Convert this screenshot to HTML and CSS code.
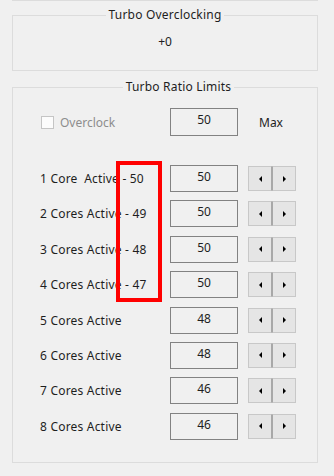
FILE: index.html
```html
<!DOCTYPE html>
<html lang="en">
<head>
    <meta charset="UTF-8">
    <title>Turbo Ratio Limits</title>
    <link rel="stylesheet" href="styles.css">
</head>
<body>
<!-- 上一个分组框的底边 -->
<div class="prev-edge"></div>

<!-- Turbo Overclocking 分组 -->
<fieldset class="group group-oc">
    <legend>Turbo Overclocking</legend>
    <div class="oc-value">+0</div>
</fieldset>

<!-- Turbo Ratio Limits 分组 -->
<fieldset class="group group-ratio">
    <legend>Turbo Ratio Limits</legend>

    <div class="row row-top">
        <label class="check disabled"><span class="box"></span>Overclock</label>
        <div class="field">50</div>
        <span class="max">Max</span>
    </div>

    <div class="rows">
        <div class="row"><span class="label">1 Core&nbsp; Active - 50</span><div class="field">50</div><div class="spin"><span class="btn"><i class="arrow left"></i></span><span class="btn"><i class="arrow right"></i></span></div></div>
        <div class="row"><span class="label">2 Cores Active - 49</span><div class="field">50</div><div class="spin"><span class="btn"><i class="arrow left"></i></span><span class="btn"><i class="arrow right"></i></span></div></div>
        <div class="row"><span class="label">3 Cores Active - 48</span><div class="field">50</div><div class="spin"><span class="btn"><i class="arrow left"></i></span><span class="btn"><i class="arrow right"></i></span></div></div>
        <div class="row"><span class="label">4 Cores Active - 47</span><div class="field">50</div><div class="spin"><span class="btn"><i class="arrow left"></i></span><span class="btn"><i class="arrow right"></i></span></div></div>
        <div class="row"><span class="label">5 Cores Active</span><div class="field">48</div><div class="spin"><span class="btn"><i class="arrow left"></i></span><span class="btn"><i class="arrow right"></i></span></div></div>
        <div class="row"><span class="label">6 Cores Active</span><div class="field">48</div><div class="spin"><span class="btn"><i class="arrow left"></i></span><span class="btn"><i class="arrow right"></i></span></div></div>
        <div class="row"><span class="label">7 Cores Active</span><div class="field">46</div><div class="spin"><span class="btn"><i class="arrow left"></i></span><span class="btn"><i class="arrow right"></i></span></div></div>
        <div class="row"><span class="label">8 Cores Active</span><div class="field">46</div><div class="spin"><span class="btn"><i class="arrow left"></i></span><span class="btn"><i class="arrow right"></i></span></div></div>
    </div>

    <!-- 红色标注框 -->
    <div class="highlight"></div>
</fieldset>
</body>
</html>
```

FILE: styles.css
```css
* {
    margin: 0;
    padding: 0;
    box-sizing: border-box;
}

body {
    width: 334px;
    height: 476px;
    background-color: #f0f0f0;
    font-family: "Noto Sans", "Open Sans", sans-serif;
    font-size: 12px;
    color: #1e1e1e;
    overflow: hidden;
}

/* 上一个分组框的底边 */
.prev-edge {
    margin: 0 16px 0 12px;
    height: 1px;
    background-color: #dcdcdc;
}

/* 分组框 */
.group {
    margin: 6px 16px 0 12px;
    border: 1px solid #dcdcdc;
    position: relative;
}

.group legend {
    margin: 0 auto;
    padding: 0 3px;
    line-height: 16px;
    color: #1e1e1e;
    letter-spacing: 0.2px;
}

.group-oc {
    height: 64px;
}

.oc-value {
    text-align: center;
    line-height: 16px;
    margin-top: 11px;
}

.group-ratio {
    margin-top: 8px;
    height: 384px;
    padding: 13px 0 0 27px;
}

/* 行 */
.row {
    display: flex;
    align-items: center;
    height: 27px;
}

.row-top {
    height: 28px;
}

.rows {
    margin-top: 29px;
    display: flex;
    flex-direction: column;
    gap: 8.4px;
}

.label {
    width: 130px;
    white-space: nowrap;
    letter-spacing: 0.2px;
}

/* 复选框 */
.check {
    width: 130px;
    display: flex;
    align-items: center;
}

.check .box {
    width: 13px;
    height: 13px;
    border: 1px solid #c5c5c5;
    background-color: #fcfcfc;
    margin: 0 6px 0 1px;
}

.check.disabled {
    color: #8d8d8d;
}

/* 只读文本框 */
.field {
    width: 68px;
    height: 100%;
    border: 1px solid #828282;
    background-color: #f0f0f0;
    text-align: center;
    line-height: 22px;
}

.max {
    margin-left: 21px;
}

/* 微调按钮 */
.spin {
    display: flex;
    margin-left: 10px;
    height: 25px;
}

.spin .btn {
    width: 24px;
    height: 25px;
    border: 1px solid #c8c8c8;
    background-color: #e5e5e5;
    display: flex;
    align-items: center;
    justify-content: center;
}

.spin .btn:first-child {
    border-right-color: #a8a8a8;
}

.spin .btn + .btn {
    border-left: 1px solid #a8a8a8;
}

.arrow {
    width: 0;
    height: 0;
    border-top: 3px solid transparent;
    border-bottom: 3px solid transparent;
}

.arrow.left {
    border-right: 3px solid #000;
}

.arrow.right {
    border-left: 3px solid #000;
}

/* 红色标注框 */
.highlight {
    position: absolute;
    left: 103px;
    top: 66px;
    width: 46px;
    height: 141px;
    border: 4px solid #ff0000;
}
```
